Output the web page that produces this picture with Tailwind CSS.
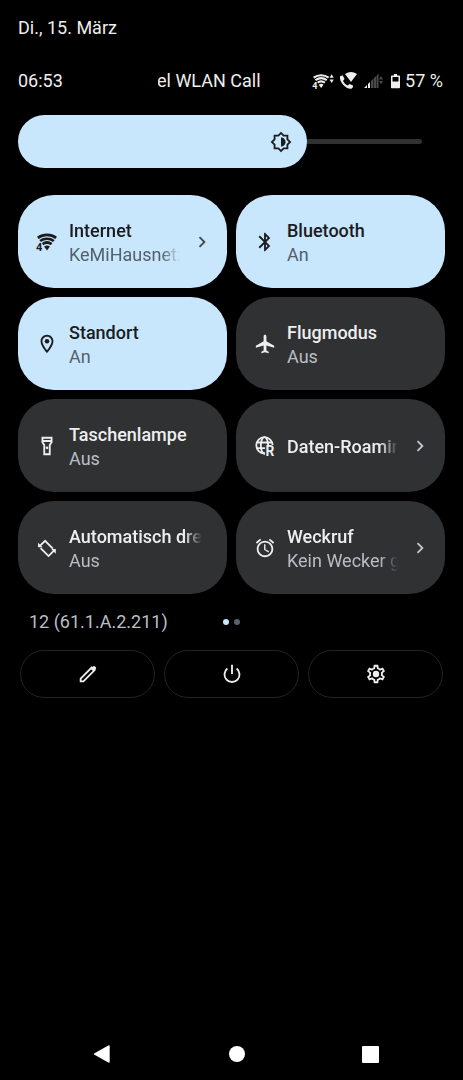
<!DOCTYPE html>
<html lang="de">
  <head>
    <meta charset="UTF-8" />
    <meta name="viewport" content="width=device-width, initial-scale=1.0" />
    <title>Schnelleinstellungen</title>
    <script src="https://cdn.jsdelivr.net/npm/@tailwindcss/browser@4"></script>
  </head>
  <body class="bg-black font-[Roboto,sans-serif] text-[18px] leading-6 text-[#eeeeee]">
    <div class="flex min-h-screen flex-col">
      <!-- Header -->
      <header class="px-[18px] pt-4">
        <p>Di., 15. März</p>
        <div class="mt-[29px] flex items-center">
          <span class="w-[140px]">06:53</span>
          <span class="overflow-hidden -indent-px whitespace-nowrap">el WLAN Call</span>
          <div class="ml-auto flex items-center pr-[2px]">
            <svg class="h-[18px] w-[22px] overflow-visible" viewBox="0 0 29 24" fill="none" stroke="#eeeeee" stroke-width="2.800">
              <path d="M2 7.500A17 17 0 0 1 22 7.500M4.500 10.900A12.800 12.800 0 0 1 19.500 10.900M7 14.300A8.600 8.600 0 0 1 17 14.300" />
              <path d="M8.800 16.900A5.400 5.400 0 0 1 15.200 16.900L12 21.300zM26 3l2.800 4.500h-5.600zM26 14.500l2.800-4.500h-5.600z" fill="#eeeeee" stroke="none" />
              <text x="0" y="22" font-size="12" font-weight="700" fill="#eeeeee" stroke="#000000" stroke-width="2" paint-order="stroke">4</text>
            </svg>
            <svg class="ml-[5px] h-5 w-[18px]" viewBox="0 0 18 20" fill="#eeeeee">
              <path d="M6 3Q12 -1 18 3L12 11z" />
              <path d="M1 5.500Q2.500 4 3.800 4.500L5.500 8 4 10Q5.500 13 8.600 14.600L10.600 13 14 14.600Q14.400 16.500 12.800 17.600C8 19 0 11.500 1 5.500z" />
            </svg>
            <svg class="ml-[7px] h-5 w-[19px]" viewBox="0 0 19 20">
              <path d="M0 17l3-3v3zM4 13l2-2v6H4z" fill="#eeeeee" />
              <path d="M7 10l2.500-2.500V17H7zM10 7l2.500-2.500V17H10zM13 4l1.500-1.500V17H13z" fill="#4a4a4a" />
              <path d="M17 5l2 3.500h-4zM17 13.500l2-3.500h-4z" fill="#4a4a4a" />
            </svg>
            <svg class="ml-[8px] h-5 w-[9px]" viewBox="0 0 9 20">
              <path d="M3 3h3v1.500h2.200q.8 0 .8.8V16.500q0 .8-.8.8H.8q-.8 0-.8-.8V5.300q0-.8.8-.8H3zM1.500 6v4.500h6V6z" fill="#eeeeee" fill-rule="evenodd" />
            </svg>
            <span class="ml-[5px] whitespace-nowrap">57 %</span>
          </div>
        </div>
      </header>

      <main class="px-[18px]">
        <!-- Brightness -->
        <div class="relative mt-[22px] mr-[23px] flex h-[53px] items-center">
          <div class="absolute inset-x-0 h-[5px] rounded-full bg-[#303133]"></div>
          <div class="relative flex h-full items-center justify-end rounded-full bg-[#c8e6fc] pr-[15px]" style="width: 71.5%">
            <svg class="size-[22px]" viewBox="0 0 24 24" fill="#1b1c1e">
              <path d="M20 8.690V4h-4.690L12 .69 8.690 4H4v4.690L.69 12 4 15.310V20h4.690L12 23.310 15.310 20H20v-4.690L23.310 12 20 8.690zm-2 5.790V18h-3.520L12 20.480 9.520 18H6v-3.520L3.520 12 6 9.520V6h3.520L12 3.520 14.480 6H18v3.520L20.480 12 18 14.480zM12 7v10c2.760 0 5-2.240 5-5s-2.240-5-5-5z" />
            </svg>
          </div>
          <input type="range" min="0" max="100" value="70" aria-label="Helligkeit" class="absolute inset-0 h-full w-full cursor-pointer opacity-0" />
        </div>

        <!-- Tiles -->
        <div class="mt-[27px] grid grid-cols-2 gap-[9px]">
          <button type="button" aria-pressed="true" class="flex h-[93px] items-center rounded-[36px] bg-[#c8e6fc] pr-[14px] pl-[18px] text-left text-[#1b1c1e]">
            <svg class="size-[22px] shrink-0 overflow-visible" viewBox="0 0 24 24" fill="none" stroke="currentColor" stroke-width="3">
              <path d="M2 7.500A17 17 0 0 1 22 7.500M4.500 10.900A12.800 12.800 0 0 1 19.500 10.900M7 14.300A8.600 8.600 0 0 1 17 14.300" />
              <path d="M8.800 16.900A5.400 5.400 0 0 1 15.200 16.900L12 21.300z" fill="currentColor" stroke="none" />
              <text x="0" y="22" font-size="12" font-weight="700" fill="currentColor" stroke="#c8e6fc" stroke-width="2" paint-order="stroke">4</text>
            </svg>
            <span class="ml-[11px] min-w-0 flex-1 overflow-hidden pt-[2px] whitespace-nowrap [mask-image:linear-gradient(to_right,black_calc(100%-18px),transparent)]">
              <span class="block font-medium">Internet</span>
              <span class="block text-[#54616a]">KeMiHausnetz</span>
            </span>
            <svg class="ml-[11px] size-[22px] shrink-0" viewBox="0 0 24 24" fill="#3f484f"><path d="M8.590 16.590L13.170 12 8.590 7.410 10 6l6 6-6 6z" /></svg>
          </button>

          <button type="button" aria-pressed="true" class="flex h-[93px] items-center rounded-[36px] bg-[#c8e6fc] pr-[25px] pl-[18px] text-left text-[#1b1c1e]">
            <svg class="size-[22px] shrink-0" viewBox="0 0 24 24" fill="currentColor"><path d="M17.710 7.710L12 2h-1v7.590L6.410 5 5 6.410 10.590 12 5 17.590 6.410 19 11 14.410V22h1l5.710-5.710-4.300-4.290 4.300-4.290zM13 5.830l1.880 1.880L13 9.590V5.830zm1.880 10.460L13 18.170v-3.760l1.880 1.880z" /></svg>
            <span class="ml-[11px] min-w-0 flex-1 overflow-hidden pt-[2px] whitespace-nowrap">
              <span class="block font-medium">Bluetooth</span>
              <span class="block text-[#54616a]">An</span>
            </span>
          </button>

          <button type="button" aria-pressed="true" class="flex h-[93px] items-center rounded-[36px] bg-[#c8e6fc] pr-[25px] pl-[18px] text-left text-[#1b1c1e]">
            <svg class="size-[22px] shrink-0" viewBox="0 0 24 24" fill="currentColor">
              <path d="M12 2C8.130 2 5 5.130 5 9c0 5.250 7 13 7 13s7-7.750 7-13c0-3.870-3.130-7-7-7zM7 9c0-2.760 2.240-5 5-5s5 2.240 5 5c0 2.880-2.880 7.190-5 9.880C9.920 16.210 7 11.850 7 9z" />
              <circle cx="12" cy="9" r="2.500" />
            </svg>
            <span class="ml-[11px] min-w-0 flex-1 overflow-hidden pt-[2px] whitespace-nowrap">
              <span class="block font-medium">Standort</span>
              <span class="block text-[#54616a]">An</span>
            </span>
          </button>

          <button type="button" aria-pressed="false" class="flex h-[93px] items-center rounded-[36px] bg-[#303133] pr-[25px] pl-[18px] text-left">
            <svg class="size-[22px] shrink-0" viewBox="0 0 24 24" fill="currentColor"><path d="M22 16v-2l-8.500-5V3.500c0-.83-.67-1.500-1.500-1.500s-1.500.67-1.500 1.500V9L2 14v2l8.500-2.500V19L8 20.500V22l4-1 4 1v-1.500L13.500 19v-5.500L22 16z" /></svg>
            <span class="ml-[11px] min-w-0 flex-1 overflow-hidden pt-[2px] whitespace-nowrap">
              <span class="block font-medium">Flugmodus</span>
              <span class="block text-[#b9bec6]">Aus</span>
            </span>
          </button>

          <button type="button" aria-pressed="false" class="flex h-[93px] items-center rounded-[36px] bg-[#303133] pr-[25px] pl-[18px] text-left">
            <svg class="size-[22px] shrink-0" viewBox="0 0 24 24" fill="none" stroke="currentColor" stroke-width="2">
              <path d="M7 3h10v5l-2 3v10H9V11L7 8zM7 6.500h10" />
              <circle cx="12" cy="14" r="1.500" fill="currentColor" stroke="none" />
            </svg>
            <span class="ml-[11px] min-w-0 flex-1 overflow-hidden pt-[2px] whitespace-nowrap">
              <span class="block font-medium">Taschenlampe</span>
              <span class="block text-[#b9bec6]">Aus</span>
            </span>
          </button>

          <button type="button" aria-pressed="false" class="flex h-[93px] items-center rounded-[36px] bg-[#303133] pr-[14px] pl-[18px] text-left">
            <svg class="size-[22px] shrink-0 overflow-visible" viewBox="0 0 24 24" fill="none" stroke="currentColor" stroke-width="2">
              <circle cx="11.400" cy="11.300" r="8.900" />
              <ellipse cx="11.400" cy="11.300" rx="4" ry="8.900" />
              <path d="M3.300 8.200h16.200M3.300 14.400h16.200" />
              <path d="M12 11h12v12H12z" fill="#303133" stroke="none" />
              <text x="12.500" y="22.400" font-size="15" font-weight="700" fill="currentColor" stroke="none">R</text>
            </svg>
            <span class="ml-[11px] min-w-0 flex-1 overflow-hidden pt-[2px] font-medium whitespace-nowrap [mask-image:linear-gradient(to_right,black_calc(100%-18px),transparent)]">Daten-Roaming</span>
            <svg class="ml-[11px] size-[22px] shrink-0" viewBox="0 0 24 24" fill="#c4c8ce"><path d="M8.590 16.590L13.170 12 8.590 7.410 10 6l6 6-6 6z" /></svg>
          </button>

          <button type="button" aria-pressed="false" class="flex h-[93px] items-center rounded-[36px] bg-[#303133] pr-[25px] pl-[18px] text-left">
            <svg class="size-[22px] shrink-0" viewBox="0 0 24 24" fill="none" stroke="currentColor" stroke-width="2">
              <path d="M4.500 9.500L9.900 4.100 18.400 12.600M19.300 15.200L13.700 20.800 5 12.100" />
              <path d="M2.200 6.200v5H7.200zM21.600 18.200v-5H16.600z" fill="currentColor" stroke="none" />
            </svg>
            <span class="ml-[11px] min-w-0 flex-1 overflow-hidden pt-[2px] whitespace-nowrap [mask-image:linear-gradient(to_right,black_calc(100%-18px),transparent)]">
              <span class="block font-medium">Automatisch drehen</span>
              <span class="block text-[#b9bec6]">Aus</span>
            </span>
          </button>

          <button type="button" aria-pressed="false" class="flex h-[93px] items-center rounded-[36px] bg-[#303133] pr-[14px] pl-[18px] text-left">
            <svg class="size-[22px] shrink-0" viewBox="0 0 24 24" fill="currentColor"><path d="M22 5.720l-4.600-3.860-1.290 1.530 4.600 3.860L22 5.720zM7.880 3.390L6.600 1.860 2 5.710l1.290 1.530 4.590-3.850zM12.500 8H11v6l4.750 2.850.75-1.230-4-2.370V8zM12 4c-4.970 0-9 4.030-9 9s4.020 9 9 9c4.970 0 9-4.030 9-9s-4.030-9-9-9zm0 16c-3.870 0-7-3.130-7-7s3.130-7 7-7 7 3.130 7 7-3.130 7-7 7z" /></svg>
            <span class="ml-[11px] min-w-0 flex-1 overflow-hidden pt-[2px] whitespace-nowrap [mask-image:linear-gradient(to_right,black_calc(100%-18px),transparent)]">
              <span class="block font-medium">Weckruf</span>
              <span class="block text-[#b9bec6]">Kein Wecker gestellt</span>
            </span>
            <svg class="ml-[11px] size-[22px] shrink-0" viewBox="0 0 24 24" fill="#c4c8ce"><path d="M8.590 16.590L13.170 12 8.590 7.410 10 6l6 6-6 6z" /></svg>
          </button>
        </div>

        <!-- Build number and page dots -->
        <div class="mt-4 grid grid-cols-[1fr_auto_1fr] items-center">
          <span class="pl-[11px] whitespace-nowrap text-[#b9bec6]">12 (61.1.A.2.211)</span>
          <div class="flex gap-[5px]">
            <span class="size-[6px] rounded-full bg-[#c8e6fc]"></span>
            <span class="size-[6px] rounded-full bg-[#56636e]"></span>
          </div>
        </div>

        <!-- Footer actions -->
        <div class="mt-4 grid grid-cols-3 gap-[9px] px-[2px]">
          <button type="button" aria-label="Bearbeiten" class="flex h-12 items-center justify-center rounded-full border border-[#232323]">
            <svg class="size-[22px]" viewBox="0 0 24 24" fill="none" stroke="currentColor" stroke-width="2">
              <path d="M4 20v-3L16 5l3 3L7 20z" />
              <path d="M14.800 6.200l2.500-2.500q1.200-1 2.400 0l.7.700q1 1.200 0 2.400l-2.500 2.500z" fill="currentColor" stroke="none" />
            </svg>
          </button>
          <button type="button" aria-label="Ein/Aus" class="flex h-12 items-center justify-center rounded-full border border-[#232323]">
            <svg class="size-[22px]" viewBox="0 0 24 24" fill="none" stroke="currentColor" stroke-width="2">
              <path d="M12 2v10M7 6A8.200 8.200 0 1 0 17 6" />
            </svg>
          </button>
          <button type="button" aria-label="Einstellungen" class="flex h-12 items-center justify-center rounded-full border border-[#232323]">
            <svg class="size-[22px]" viewBox="0 0 24 24" fill="currentColor">
              <path d="M19.430 12.980c.04-.32.07-.64.07-.98 0-.34-.03-.66-.07-.98l2.110-1.650c.19-.15.24-.42.12-.64l-2-3.460c-.09-.16-.26-.25-.44-.25-.06 0-.12.010-.17.030l-2.490 1c-.52-.4-1.080-.73-1.690-.98l-.38-2.650C14.460 2.180 14.250 2 14 2h-4c-.25 0-.46.18-.49.42l-.38 2.650c-.61.25-1.170.59-1.690.98l-2.490-1c-.06-.02-.12-.03-.18-.03-.17 0-.34.09-.43.25l-2 3.460c-.13.22-.07.49.12.64l2.110 1.650c-.04.32-.07.65-.07.98 0 .33.03.66.07.98l-2.110 1.650c-.19.15-.24.42-.12.64l2 3.460c.09.16.26.25.44.25.06 0 .12-.01.17-.03l2.490-1c.52.4 1.080.73 1.690.98l.38 2.650c.03.24.24.42.49.42h4c.25 0 .46-.18.49-.42l.38-2.650c.61-.25 1.170-.59 1.690-.98l2.490 1c.06.020.12.030.18.030.17 0 .34-.09.43-.25l2-3.460c.12-.22.07-.49-.12-.64l-2.110-1.650zm-1.980-1.710c.04.31.05.52.05.73 0 .21-.02.43-.05.73l-.14 1.130.89.7 1.080.84-.7 1.210-1.270-.51-1.040-.42-.9.68c-.43.32-.84.56-1.250.73l-1.060.43-.16 1.130-.2 1.350h-1.400l-.19-1.350-.16-1.130-1.060-.43c-.43-.18-.83-.41-1.230-.71l-.91-.7-1.060.43-1.270.51-.7-1.210 1.080-.84.89-.7-.14-1.130c-.03-.31-.05-.54-.05-.74s.02-.43.05-.73l.14-1.130-.89-.7-1.080-.84.7-1.210 1.270.51 1.040.42.9-.68c.43-.32.84-.56 1.250-.73l1.060-.43.16-1.130.2-1.350h1.390l.19 1.350.16 1.130 1.060.43c.43.18.83.41 1.230.71l.91.7 1.060-.43 1.270-.51.7 1.210-1.070.85-.89.7.14 1.130z" />
              <circle cx="12" cy="12" r="3.500" />
            </svg>
          </button>
        </div>
      </main>

      <!-- System navigation -->
      <nav class="mt-auto flex items-center justify-between pr-[84px] pb-[17px] pl-[93px]">
        <button type="button" aria-label="Zurück">
          <svg class="size-[18px]" viewBox="0 0 18 18" fill="#ffffff"><path d="M1.500 8.200L15.300.4q1.200-.5 1.400.6v16q-.2 1.100-1.400.6L1.500 9.800q-1-.8 0-1.600z" /></svg>
        </button>
        <button type="button" aria-label="Startbildschirm" class="size-4 rounded-full bg-white"></button>
        <button type="button" aria-label="Übersicht" class="size-[17px] rounded-[1px] bg-white"></button>
      </nav>
    </div>
  </body>
</html>
